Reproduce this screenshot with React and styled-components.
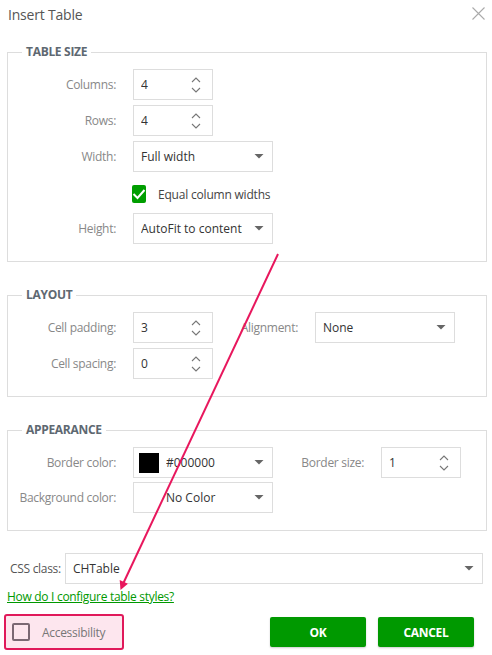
import styled, { createGlobalStyle } from "styled-components";

const GlobalStyle = createGlobalStyle`
  html, body {
    margin: 0;
    padding: 0;
    background: #ffffff;
  }
  body {
    font-family: "Open Sans", "Noto Sans", sans-serif;
    font-size: 12px;
    color: #333;
  }
`;

function Chevrons() {
  return (
    <svg width="10" height="18" viewBox="0 0 10 18">
      <path d="M1 6 L5 2 L9 6" fill="none" stroke="#777" strokeWidth="1.1" />
      <path d="M1 12 L5 16 L9 12" fill="none" stroke="#777" strokeWidth="1.1" />
    </svg>
  );
}

function Caret() {
  return (
    <svg width="10" height="5" viewBox="0 0 10 5">
      <path d="M0.5 0 L9.5 0 L5 4.6 Z" fill="#666" />
    </svg>
  );
}

function Spinner({ value }) {
  return (
    <SpinBox>
      <Value>{value}</Value>
      <Chevrons />
    </SpinBox>
  );
}

function Select({ value, width, swatch }) {
  return (
    <SelectBox $width={width}>
      {swatch !== undefined && <Swatch $color={swatch} />}
      <Value>{value}</Value>
      <Caret />
    </SelectBox>
  );
}

function App() {
  return (
    <>
      <GlobalStyle />
      <Dialog>
        <Header>
          <Title>Insert Table</Title>
          <Close>
            <svg width="13" height="13" viewBox="0 0 13 13">
              <path d="M0.5 0.5 L12.5 12.5 M12.5 0.5 L0.5 12.5" stroke="#aaa" strokeWidth="1.1" />
            </svg>
          </Close>
        </Header>

        <Group $top={16}>
          <Legend>TABLE SIZE</Legend>
          <Grid $cols="98px 80px">
            <Label>Columns:</Label>
            <Spinner value="4" />
            <Label>Rows:</Label>
            <Spinner value="4" />
            <Label>Width:</Label>
            <Select value="Full width" width={140} />
            <span />
            <CheckRow>
              <GreenCheck>
                <svg width="14" height="12" viewBox="0 0 14 12">
                  <path d="M1.5 6 L5.5 10 L12.5 2" fill="none" stroke="#fff" strokeWidth="2" />
                </svg>
              </GreenCheck>
              <CheckText>Equal column widths</CheckText>
            </CheckRow>
            <Label>Height:</Label>
            <Select value="AutoFit to contents" width={140} />
          </Grid>
        </Group>

        <Group $top={25}>
          <Legend>LAYOUT</Legend>
          <Grid $cols="98px 80px 68px 140px">
            <Label>Cell padding:</Label>
            <Spinner value="3" />
            <Label>Alignment:</Label>
            <Select value="None" width={140} />
            <Label>Cell spacing:</Label>
            <Spinner value="0" />
          </Grid>
        </Group>

        <Group $top={25}>
          <Legend>APPEARANCE</Legend>
          <Grid $cols="98px 140px 74px 80px" $rowGap={4}>
            <Label>Border color:</Label>
            <Select value="#000000" width={140} swatch="#000" />
            <Label>Border size:</Label>
            <Spinner value="1" />
            <Label>Background color:</Label>
            <Select value="No Color" width={140} swatch="transparent" />
          </Grid>
        </Group>

        <CssRow>
          <CssLabel>CSS class:</CssLabel>
          <SelectBox $grow>
            <Value>CHTable</Value>
            <Caret />
          </SelectBox>
        </CssRow>

        <HelpLink href="#">How do I configure table styles?</HelpLink>

        <Footer>
          <A11yBox>
            <EmptyCheck />
            <A11yText>Accessibility</A11yText>
          </A11yBox>
          <Buttons>
            <Button>OK</Button>
            <Button>CANCEL</Button>
          </Buttons>
        </Footer>

        <Annotation width="492" height="655" viewBox="0 0 492 655">
          <line x1="278" y1="254" x2="122.5" y2="585" stroke="#e8175d" strokeWidth="2" />
          <polygon points="120.5,590 119.7,579.9 127.9,583.7" fill="#e8175d" />
        </Annotation>
      </Dialog>
    </>
  );
}

const Dialog = styled.div`
  position: relative;
  width: 492px;
  height: 655px;
  box-sizing: border-box;
  overflow: hidden;
`;

const Header = styled.div`
  height: 28px;
  display: flex;
  align-items: center;
  justify-content: space-between;
  padding: 0 7px 0 8px;
`;

const Title = styled.div`
  font-size: 14px;
  color: #555;
  letter-spacing: -0.2px;
`;

const Close = styled.div`
  display: flex;
  margin-top: -2px;
`;

const Group = styled.fieldset`
  margin: ${(p) => p.$top}px 5px 0 7px;
  padding: 9px 10px 17px 10px;
  border: 1px solid #ddd;
  min-width: 0;
`;

const Legend = styled.legend`
  margin-left: 4px;
  padding: 0 4px;
  font-size: 12px;
  font-weight: 700;
  line-height: 16px;
  color: #5e6871;
  letter-spacing: -0.3px;
`;

const Grid = styled.div`
  display: grid;
  grid-template-columns: ${(p) => p.$cols};
  column-gap: 17px;
  row-gap: ${(p) => p.$rowGap ?? 5}px;
  align-items: center;
`;

const Label = styled.div`
  text-align: right;
  color: #888;
  white-space: nowrap;
  letter-spacing: -0.3px;
`;

const SpinBox = styled.div`
  width: 80px;
  height: 31px;
  box-sizing: border-box;
  border: 1px solid #ddd;
  display: flex;
  align-items: center;
  padding: 0 11px 0 7px;
`;

const SelectBox = styled.div`
  width: ${(p) => (p.$grow ? "auto" : `${p.$width}px`)};
  flex: ${(p) => (p.$grow ? 1 : "none")};
  height: 31px;
  box-sizing: border-box;
  border: 1px solid #ddd;
  display: flex;
  align-items: center;
  padding: 0 8px 0 7px;
`;

const Value = styled.div`
  flex: 1;
  overflow: hidden;
  white-space: nowrap;
  margin-right: 12px;
  color: #333;
`;

const Swatch = styled.div`
  width: 20px;
  height: 20px;
  flex: none;
  margin: 0 7px 0 -2px;
  background: ${(p) => p.$color};
`;

const CheckRow = styled.div`
  display: flex;
  align-items: center;
  margin: 8px 0 5px -1px;
`;

const GreenCheck = styled.div`
  width: 18px;
  height: 18px;
  border-radius: 2px;
  background: #009e00;
  display: flex;
  align-items: center;
  justify-content: center;
`;

const CheckText = styled.span`
  margin-left: 12px;
  color: #444;
  white-space: nowrap;
  letter-spacing: -0.2px;
`;

const CssRow = styled.div`
  display: flex;
  align-items: center;
  gap: 4px;
  margin: 22px 9px 0 10px;
`;

const CssLabel = styled.div`
  color: #555;
  letter-spacing: -0.3px;
`;

const HelpLink = styled.a`
  display: inline-block;
  margin: 5px 0 0 7px;
  line-height: 16px;
  color: #009900;
  text-decoration: underline;
  letter-spacing: -0.3px;
`;

const Footer = styled.div`
  display: flex;
  align-items: center;
  justify-content: space-between;
  margin: 9px 18px 0 4px;
`;

const A11yBox = styled.div`
  width: 120px;
  height: 36px;
  box-sizing: border-box;
  border: 2px solid #e0195a;
  border-radius: 3px;
  background: #fde6ee;
  display: flex;
  align-items: center;
  padding-left: 6px;
`;

const EmptyCheck = styled.div`
  width: 18px;
  height: 18px;
  box-sizing: border-box;
  border: 2px solid #7b6873;
  border-radius: 2px;
  background: #fde6ee;
`;

const A11yText = styled.span`
  margin-left: 12px;
  color: #777;
  letter-spacing: -0.3px;
`;

const Buttons = styled.div`
  display: flex;
  gap: 12px;
`;

const Button = styled.button`
  width: 96px;
  height: 30px;
  border: none;
  border-radius: 2px;
  background: #009900;
  color: #fff;
  font-family: "Open Sans", sans-serif;
  font-size: 12px;
  font-weight: 700;
  letter-spacing: -0.3px;
  box-shadow: 0 1px 2px rgba(0, 0, 0, 0.2);
`;

const Annotation = styled.svg`
  position: absolute;
  inset: 0;
  pointer-events: none;
`;

export default App;
